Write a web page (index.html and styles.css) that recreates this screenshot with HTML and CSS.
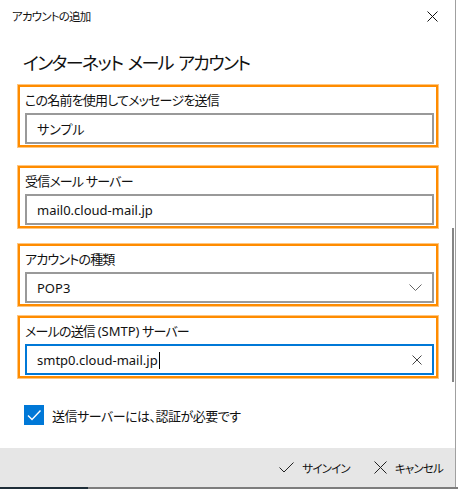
FILE: index.html
```html
<!DOCTYPE html>
<html lang="ja">
<head>
<meta charset="UTF-8">
<meta name="viewport" content="width=device-width, initial-scale=1.0">
<title>アカウントの追加</title>
<link rel="stylesheet" href="styles.css">
</head>
<body>
    <div class="window">
        <!-- タイトルバー -->
        <div class="titlebar">
            <span class="title">アカウントの追加</span>
            <svg class="close" width="11" height="11" viewBox="0 0 11 11"><path d="M0.5 0.5L10.5 10.5M10.5 0.5L0.5 10.5" stroke="#111" stroke-width="1" fill="none"/></svg>
        </div>

        <div class="content">
            <h1 class="heading">インターネット メール アカウント</h1>

            <div class="field first">
                <div class="label">この名前を使用してメッセージを送信</div>
                <div class="input">サンプル</div>
            </div>

            <div class="field second">
                <div class="label">受信メール サーバー</div>
                <div class="input">mail0.cloud-mail.jp</div>
            </div>

            <div class="field third">
                <div class="label">アカウントの種類</div>
                <div class="input">
                    <span>POP3</span>
                    <svg class="chevron" width="13" height="8" viewBox="0 0 13 8"><path d="M0.5 0.5L6.5 6.5L12.5 0.5" stroke="#666" stroke-width="1" fill="none"/></svg>
                </div>
            </div>

            <div class="field fourth">
                <div class="label">メールの送信 <span class="latin">(SMTP)</span> サーバー</div>
                <div class="input focus">
                    <span>smtp0.cloud-mail.jp<span class="caret"></span></span>
                    <svg class="clear" width="10" height="10" viewBox="0 0 10 10"><path d="M0.5 0.5L9.5 9.5M9.5 0.5L0.5 9.5" stroke="#444" stroke-width="1" fill="none"/></svg>
                </div>
            </div>

            <div class="check-row">
                <div class="checkbox">
                    <svg width="20" height="20" viewBox="0 0 20 20"><path d="M4 10.5L8 14.5L16.5 5.5" stroke="#fff" stroke-width="1.4" fill="none"/></svg>
                </div>
                <span>送信サーバーには、認証が必要です</span>
            </div>
        </div>

        <!-- 下部のボタン -->
        <div class="footer">
            <div class="action">
                <svg width="15" height="11" viewBox="0 0 15 11"><path d="M0.5 5.5L5 10L14.5 0.5" stroke="#222" stroke-width="1" fill="none"/></svg>
                <span>サインイン</span>
            </div>
            <div class="action">
                <svg width="13" height="13" viewBox="0 0 13 13"><path d="M0.5 0.5L12.5 12.5M12.5 0.5L0.5 12.5" stroke="#222" stroke-width="1" fill="none"/></svg>
                <span>キャンセル</span>
            </div>
        </div>

        <div class="scroll-thumb"></div>
    </div>
    <div class="taskbar"></div>
</body>
</html>
```

FILE: styles.css
```css
body {
    margin: 0;
    background: #fff;
    font-family: "Noto Sans", "Noto Sans CJK JP", sans-serif;
    font-feature-settings: "palt";
    color: #111;
}

.window {
    position: relative;
    width: 456px;
    height: 487px;
    box-sizing: border-box;
    border-right: 1px solid #a0a0a0;
    display: flex;
    flex-direction: column;
}

.titlebar {
    height: 32px;
    display: flex;
    align-items: center;
    justify-content: space-between;
    padding: 0 17px 0 12px;
}

.title {
    font-size: 11.5px;
    letter-spacing: -0.8px;
}

.content {
    flex: 1;
    padding-left: 18px;
}

.heading {
    margin: 17px 0 0 5px;
    font-size: 18px;
    line-height: 28px;
    font-weight: normal;
    letter-spacing: -1.6px;
    word-spacing: 2px;
}

.field {
    width: 420px;
    height: 62px;
    box-sizing: border-box;
    border: 2px solid #ff8c00;
    outline: 1px solid #ffc680;
    padding: 3px 2px 0 5px;
}

.field.first { margin-top: 8px; }
.field.second { margin-top: 19px; }
.field.third { margin-top: 16px; }
.field.fourth { margin-top: 10px; }

.label {
    font-size: 13px;
    letter-spacing: -0.8px;
    line-height: 20px;
    height: 20px;
    white-space: nowrap;
}

.label .latin {
    letter-spacing: 0;
}

.input {
    margin-top: 3px;
    height: 31px;
    box-sizing: border-box;
    border: 2px solid #999;
    padding: 0 10px 0 10px;
    display: flex;
    align-items: center;
    justify-content: space-between;
    font-size: 13px;
}

.input.focus {
    border-color: #0078d7;
}

.caret {
    display: inline-block;
    width: 1px;
    height: 17px;
    background: #000;
    vertical-align: -4px;
    margin-left: 1px;
}

.check-row {
    margin-top: 27px;
    margin-left: 6px;
    display: flex;
    align-items: center;
    gap: 8px;
    font-size: 13px;
    letter-spacing: -0.5px;
}

.checkbox {
    width: 20px;
    height: 20px;
    background: #0078d7;
}

.checkbox svg {
    display: block;
}

.footer {
    height: 39px;
    background: #e6e6e6;
    display: flex;
    justify-content: flex-end;
    align-items: center;
    gap: 24px;
    padding-right: 12px;
    font-size: 11.5px;
    letter-spacing: -0.8px;
}

.action {
    display: flex;
    align-items: center;
    gap: 8px;
}

.scroll-thumb {
    position: absolute;
    left: 452px;
    top: 228px;
    width: 2px;
    height: 154px;
    background: #858585;
}

.taskbar {
    height: 2px;
    background: linear-gradient(to right, #1e2d38 88px, #7d7d7d 88px);
}
```
